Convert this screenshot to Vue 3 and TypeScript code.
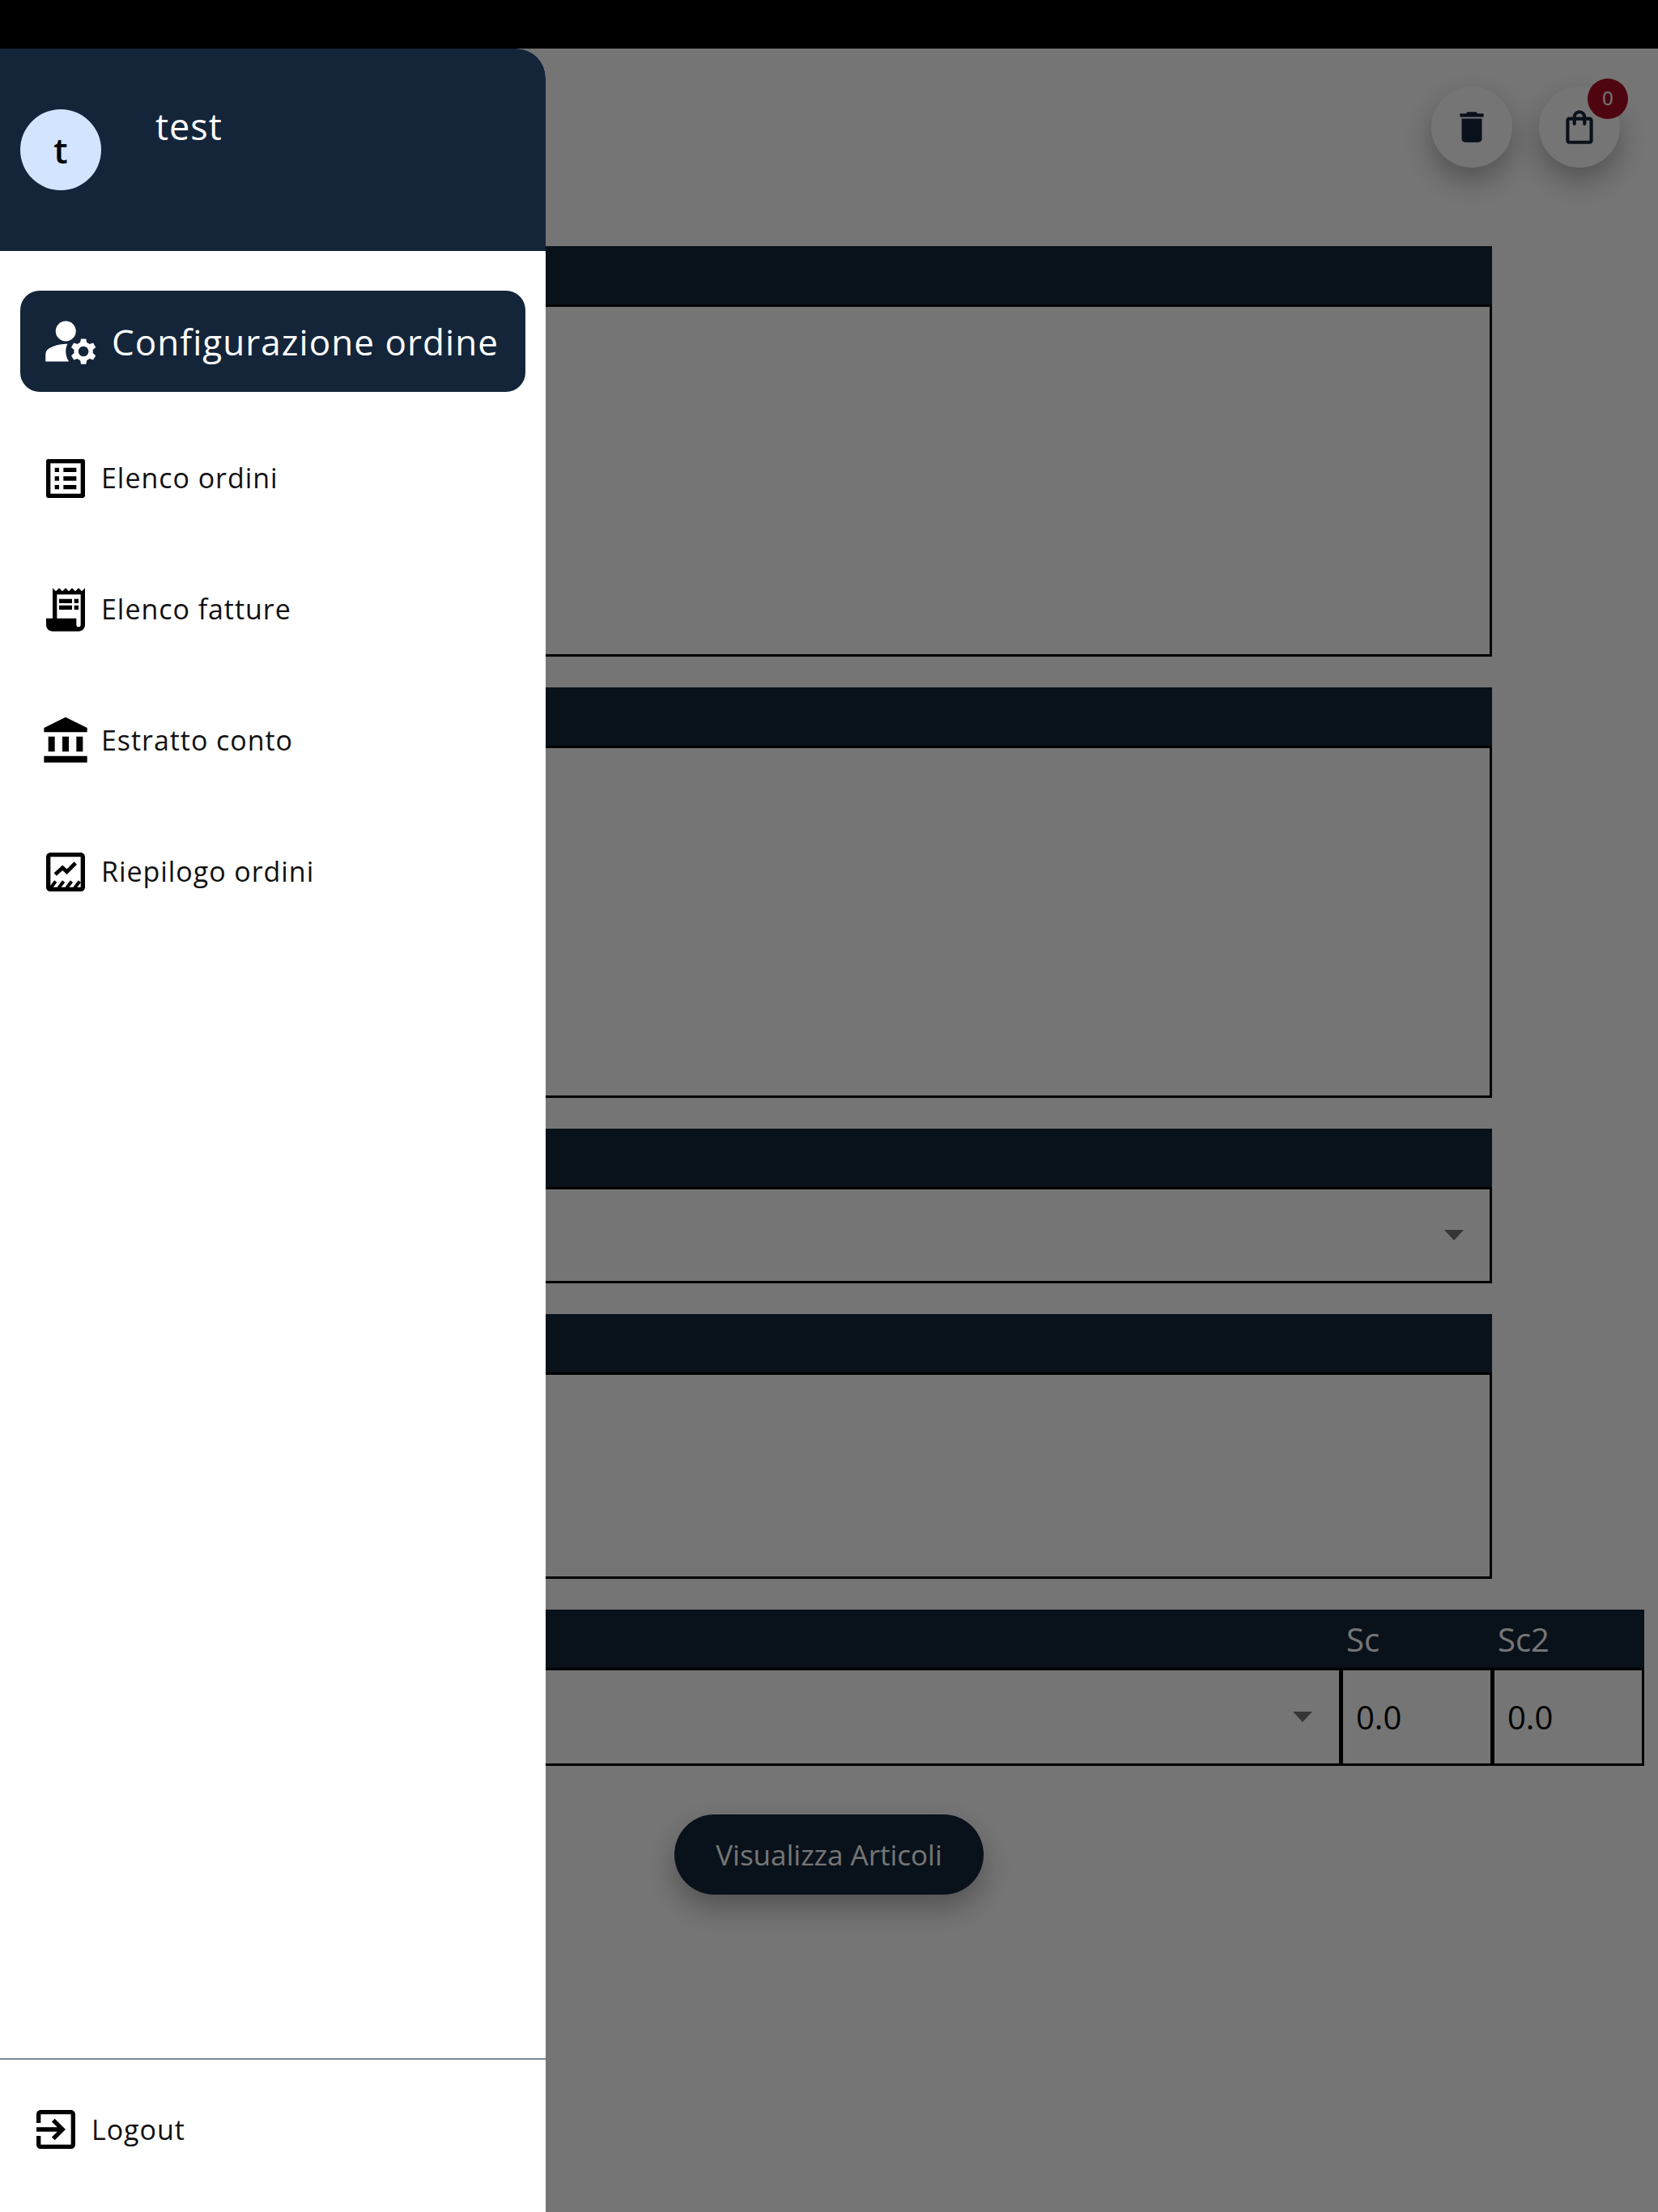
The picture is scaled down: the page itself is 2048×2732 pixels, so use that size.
<script setup lang="ts">
interface NavItem { label: string; kind: string }
const items: NavItem[] = [
  { label: 'Elenco ordini', kind: 'list' },
  { label: 'Elenco fatture', kind: 'receipt' },
  { label: 'Estratto conto', kind: 'bank' },
  { label: 'Riepilogo ordini', kind: 'chart' },
]
</script>

<template>
  <div class="root">
    <div class="status"></div>
    <main class="page">
      <div class="toolbar">
        <button class="fab">
          <svg class="fab-icon" viewBox="0 0 24 24"><path d="M6 19c0 1.1.9 2 2 2h8c1.1 0 2-.9 2-2V7H6v12zM19 4h-3.5l-1-1h-5l-1 1H5v2h14V4z" /></svg>
        </button>
        <button class="fab">
          <svg class="fab-icon" viewBox="0 0 24 24"><path d="M18 6h-2c0-2.21-1.79-4-4-4S8 3.79 8 6H6c-1.1 0-2 .9-2 2v12c0 1.1.9 2 2 2h12c1.1 0 2-.9 2-2V8c0-1.1-.9-2-2-2zm-6-2c1.1 0 2 .9 2 2h-4c0-1.1.9-2 2-2zm6 16H6V8h2v2c0 .55.45 1 1 1s1-.45 1-1V8h4v2c0 .55.45 1 1 1s1-.45 1-1V8h2v12z" /></svg>
          <span class="badge">0</span>
        </button>
      </div>
      <section class="panel">
        <div class="panel-head"></div>
        <div class="panel-body tall"></div>
      </section>
      <section class="panel">
        <div class="panel-head"></div>
        <div class="panel-body tall"></div>
      </section>
      <section class="panel">
        <div class="panel-head"></div>
        <div class="panel-body select"><span class="caret"></span></div>
      </section>
      <section class="panel">
        <div class="panel-head"></div>
        <div class="panel-body medium"></div>
      </section>
      <section class="panel wide">
        <div class="panel-head wide-head">
          <span></span>
          <span class="col-label">Sc</span>
          <span class="col-label">Sc2</span>
        </div>
        <div class="wide-row">
          <div class="wide-select"><span class="caret"></span></div>
          <div class="num">0.0</div>
          <div class="num">0.0</div>
        </div>
      </section>
      <div class="actions">
        <button class="cta">Visualizza Articoli</button>
      </div>
    </main>

    <div class="scrim"></div>

    <aside class="drawer">
      <header class="drawer-head">
        <div class="avatar">t</div>
        <div class="name">test</div>
      </header>
      <nav class="nav">
        <a class="active">
          <svg class="active-icon" viewBox="0 0 24 24">
            <circle cx="10" cy="8" r="4" />
            <path d="M10.67 13.02c-.22-.01-.44-.02-.67-.02-2.42 0-4.68.67-6.61 1.82-.88.52-1.39 1.5-1.39 2.53V20h9.26c-.79-1.13-1.26-2.51-1.26-4 0-1.07.25-2.07.67-2.98z" />
            <path d="M20.75 16c0-.22-.03-.42-.06-.63l1.14-1.01-1-1.73-1.45.49c-.32-.27-.68-.48-1.08-.63L18 11h-2l-.3 1.49c-.4.15-.76.36-1.08.63l-1.45-.49-1 1.73 1.14 1.01c-.03.21-.06.41-.06.63s.03.42.06.63l-1.14 1.01 1 1.73 1.45-.49c.32.27.68.48 1.08.63L16 21h2l.3-1.49c.4-.15.76-.36 1.08-.63l1.45.49 1-1.73-1.14-1.01c.03-.21.06-.41.06-.63zM17 18c-1.1 0-2-.9-2-2s.9-2 2-2 2 .9 2 2-.9 2-2 2z" />
          </svg>
          <span>Configurazione ordine</span>
        </a>
        <a v-for="item in items" :key="item.label" class="item">
          <svg class="item-icon" viewBox="0 0 24 24">
            <path v-if="item.kind === 'list'" d="M19 5v14H5V5h14m1.1-2H3.9c-.5 0-.9.4-.9.9v16.2c0 .4.4.9.9.9h16.2c.4 0 .9-.5.9-.9V3.9c0-.5-.5-.9-.9-.9zM11 7h6v2h-6V7zm0 4h6v2h-6v-2zm0 4h6v2h-6v-2zM7 7h2v2H7V7zm0 4h2v2H7v-2zm0 4h2v2H7v-2z" />
            <path v-else-if="item.kind === 'receipt'" d="M19.5 3.5L18 2l-1.5 1.5L15 2l-1.5 1.5L12 2l-1.5 1.5L9 2 7.5 3.5 6 2v14H3v3c0 1.66 1.34 3 3 3h12c1.66 0 3-1.34 3-3V2l-1.5 1.5zM19 19c0 .55-.45 1-1 1s-1-.45-1-1v-3H8V5h11v14zM9 7h6v2H9zM16 7h2v2h-2zM9 10h6v2H9zM16 10h2v2h-2z" />
            <path v-else-if="item.kind === 'bank'" d="M4 10h3v7H4zM10.5 10h3v7h-3zM2 19h20v3H2zM17 10h3v7h-3zM12 1L2 6v2h20V6z" />
            <g v-else>
              <path d="M19 3H5c-1.1 0-2 .9-2 2v14c0 1.1.9 2 2 2h14c1.1 0 2-.9 2-2V5c0-1.1-.9-2-2-2zm0 16H5V5h14v14z" />
              <path class="zig" d="M7.2 13.1l3.4-3.1 2 1.9 4-4" />
              <path class="hatch" d="M5 19.5l2.4-3.2M8.7 19.5l2.4-3.2M12.4 19.5l2.4-3.2M16.1 19.5l2.4-3.2" />
            </g>
          </svg>
          <span>{{ item.label }}</span>
        </a>
      </nav>
      <footer class="drawer-foot">
        <a class="logout">
          <svg class="item-icon" viewBox="0 0 24 24"><path d="M10.09 15.59L11.5 17l5-5-5-5-1.41 1.41L12.67 11H3v2h9.67l-2.58 2.59zM19 3H5c-1.11 0-2 .9-2 2v4h2V5h14v14H5v-4H3v4c0 1.1.89 2 2 2h14c1.1 0 2-.9 2-2V5c0-1.1-.9-2-2-2z" /></svg>
          <span>Logout</span>
        </a>
      </footer>
    </aside>
  </div>
</template>

<style scoped>
.root {
  position: relative;
  width: 2048px;
  height: 2732px;
  overflow: hidden;
  background: #fff;
  font-family: "Open Sans", "Liberation Sans", sans-serif;
  display: flex;
  flex-direction: column;
}
.status {
  height: 60px;
  background: #000;
  flex: none;
  position: relative;
  z-index: 3;
}
.page {
  flex: 1;
  display: flex;
  flex-direction: column;
  gap: 38px;
}
.toolbar {
  height: 206px;
  padding: 47px 47px 0 0;
  box-sizing: border-box;
  display: flex;
  justify-content: flex-end;
  gap: 33px;
}
.fab {
  position: relative;
  width: 100px;
  height: 100px;
  border-radius: 50%;
  border: none;
  padding: 0;
  background: #fff;
  display: flex;
  align-items: center;
  justify-content: center;
  box-shadow: 0 16px 36px rgba(0, 0, 0, 0.3);
}
.fab-icon {
  width: 50px;
  height: 50px;
  fill: #14253a;
}
.badge {
  position: absolute;
  top: -10px;
  right: -10px;
  width: 50px;
  height: 50px;
  border-radius: 50%;
  background: #ac0d22;
  color: #fff;
  font-size: 24px;
  line-height: 50px;
  text-align: center;
}
.panel {
  width: 1843px;
  display: flex;
  flex-direction: column;
}
.panel.wide {
  width: 2031px;
}
.panel-head {
  height: 72px;
  background: #14253a;
  border-bottom: 3px solid #000;
  flex: none;
}
.panel-body {
  box-sizing: border-box;
  border-right: 3px solid #000;
  border-bottom: 3px solid #000;
}
.tall { height: 432px; }
.medium { height: 252px; }
.select {
  height: 116px;
  display: flex;
  align-items: center;
  justify-content: flex-end;
  padding-right: 32px;
}
.caret {
  width: 0;
  height: 0;
  border-left: 12px solid transparent;
  border-right: 12px solid transparent;
  border-top: 13px solid #757575;
}
.wide-head {
  display: grid;
  grid-template-columns: 1fr 187px 181px;
  align-items: center;
}
.col-label {
  color: #fff;
  font-size: 40px;
  line-height: 74px;
}
.wide-row {
  display: grid;
  grid-template-columns: 1fr 187px 187px;
  height: 118px;
  box-sizing: border-box;
  border-right: 3px solid #000;
  border-bottom: 3px solid #000;
}
.wide-select {
  display: flex;
  align-items: center;
  justify-content: flex-end;
  padding-right: 33px;
}
.num {
  border-left: 5px solid #000;
  padding-left: 16px;
  font-size: 40px;
  line-height: 115px;
  color: #000;
}
.actions {
  display: flex;
  padding: 22px 0 0 833px;
}
.cta {
  width: 382px;
  height: 99px;
  border: none;
  border-radius: 50px;
  background: #14253a;
  color: #fff;
  font-family: inherit;
  font-size: 35px;
  box-shadow: 0 16px 36px rgba(0, 0, 0, 0.3);
}
.scrim {
  position: absolute;
  inset: 60px 0 0 0;
  background: rgba(0, 0, 0, 0.54);
  z-index: 1;
}
.drawer {
  position: absolute;
  top: 60px;
  left: 0;
  bottom: 0;
  width: 674px;
  z-index: 2;
  background: #fff;
  border-top-right-radius: 36px;
  display: flex;
  flex-direction: column;
}
.drawer-head {
  height: 250px;
  flex: none;
  box-sizing: border-box;
  background: #14253a;
  border-top-right-radius: 36px;
  padding: 75px 0 0 25px;
  display: flex;
  gap: 67px;
}
.avatar {
  width: 100px;
  height: 100px;
  border-radius: 50%;
  background: #d3e4ff;
  color: #000;
  font-size: 44px;
  font-weight: 600;
  line-height: 100px;
  text-align: center;
}
.name {
  color: #fff;
  font-size: 45px;
  line-height: 60px;
  letter-spacing: 1px;
  margin-top: -9px;
}
.nav {
  flex: 1;
  padding-top: 49px;
  display: flex;
  flex-direction: column;
}
.active {
  margin: 0 25px 26px;
  height: 125px;
  flex: none;
  border-radius: 24px;
  background: #14253a;
  color: #fff;
  font-size: 44px;
  letter-spacing: 1.05px;
  display: flex;
  align-items: center;
  padding-left: 25px;
  gap: 13px;
}
.active-icon {
  width: 75px;
  height: 75px;
  fill: #fff;
  flex: none;
}
.item {
  height: 162px;
  flex: none;
  display: flex;
  align-items: center;
  padding-left: 49px;
  gap: 12px;
  font-size: 34px;
  letter-spacing: 0.95px;
  color: #111;
}
.item span {
  padding-bottom: 2px;
}
.item-icon {
  width: 64px;
  height: 64px;
  fill: #000;
  flex: none;
}
.zig {
  fill: none;
  stroke: #000;
  stroke-width: 1.8;
}
.hatch {
  fill: none;
  stroke: #000;
  stroke-width: 1.5;
}
.drawer-foot {
  height: 190px;
  flex: none;
  border-top: 2px solid #7d8798;
  box-sizing: border-box;
  padding: 54px 0 0 37px;
}
.logout {
  display: flex;
  align-items: center;
  gap: 12px;
  font-size: 34px;
  letter-spacing: 0.95px;
  color: #111;
}
</style>
